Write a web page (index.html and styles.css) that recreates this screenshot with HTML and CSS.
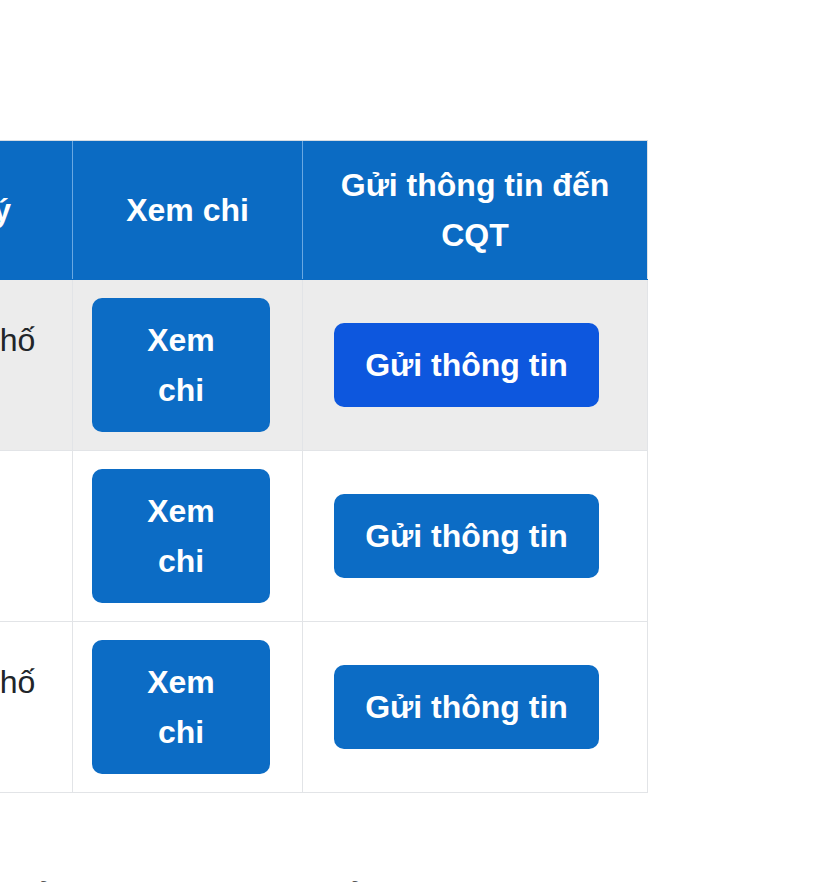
FILE: index.html
```html
<!DOCTYPE html>
<html lang="vi">
<head>
<meta charset="utf-8">
<title>Danh sách</title>
<link rel="stylesheet" href="styles.css">
</head>
<body>
<div class="page">
  <table class="grid">
    <colgroup>
      <col class="c-name">
      <col class="c-view">
      <col class="c-send">
    </colgroup>
    <thead>
      <tr>
        <th>Đơn vị quản lý</th>
        <th>Xem chi</th>
        <th>Gửi thông tin đến CQT</th>
      </tr>
    </thead>
    <tbody>
      <tr class="striped">
        <td class="name">Cục Thuế thành phố<br>Hà Nội</td>
        <td class="view"><button class="btn btn-view">Xem chi</button></td>
        <td class="send"><button class="btn btn-send is-active">Gửi thông tin</button></td>
      </tr>
      <tr>
        <td class="name">Chi cục Thuế<br>khu vực</td>
        <td class="view"><button class="btn btn-view">Xem chi</button></td>
        <td class="send"><button class="btn btn-send">Gửi thông tin</button></td>
      </tr>
      <tr>
        <td class="name">Cục Thuế thành phố<br>Hải Phòng</td>
        <td class="view"><button class="btn btn-view">Xem chi</button></td>
        <td class="send"><button class="btn btn-send">Gửi thông tin</button></td>
      </tr>
    </tbody>
  </table>
  <p class="footnote">Hiển thị từ 1 đến 3 của tổng số 3 bản ghi được tìm thấy</p>
</div>
</body>
</html>
```

FILE: styles.css
```css
html, body {
  margin: 0;
  padding: 0;
  background: #ffffff;
}

body {
  font-family: "Liberation Sans", Arial, sans-serif;
  color: #212529;
  font-size: 32px;
  line-height: 50px;
}

.page {
  width: 814px;
  height: 882px;
  overflow: hidden;
  padding-top: 140px;
  box-sizing: border-box;
}

.grid {
  border-collapse: collapse;
  table-layout: fixed;
  width: 920px;
  margin-left: -273px;
  border: 1px solid #dee2e6;
}

.c-name { width: 345px; }
.c-view { width: 230px; }
.c-send { width: 345px; }

.grid th {
  background: #0b6bc3;
  color: #ffffff;
  font-weight: bold;
  text-align: center;
  vertical-align: middle;
  padding: 19px 16px;
  border-left: 1px solid #6aa8e2;
  border-top: 1px solid #d5dce3;
  border-bottom: 1px solid #0b6bc3;
}

.grid th:first-child {
  border-left: none;
}

.grid td {
  border: 1px solid #e2e4e7;
  vertical-align: middle;
  padding: 18px 0;
}

.grid td.name {
  padding-left: 18px;
  padding-right: 18px;
  text-align: left;
}

.grid td.view {
  padding-left: 19px;
}

.grid td.send {
  padding-left: 31px;
}

.striped td {
  background: #ececec;
}

.btn {
  display: block;
  box-sizing: border-box;
  border: none;
  border-radius: 10px;
  color: #ffffff;
  font-family: "Liberation Sans", Arial, sans-serif;
  font-weight: bold;
  font-size: 32px;
  line-height: 50px;
  text-align: center;
  padding: 17px 0;
  margin: 0;
  cursor: pointer;
}

.btn-view {
  width: 178px;
  padding: 17px 34px;
  background: #0c6cc5;
}

.btn-send {
  width: 265px;
  background: #0c6cc5;
}

.btn-send.is-active {
  background: #0d57de;
}

.footnote {
  margin: 79px 0 0 0;
  line-height: 48px;
  white-space: nowrap;
  color: #555;
}
```
